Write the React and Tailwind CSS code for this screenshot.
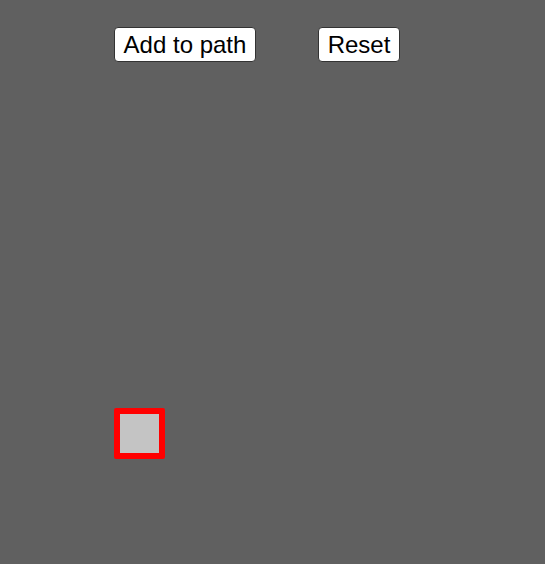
export default function App() {
  return (
    <div className="relative w-full h-[564px] bg-[#606060] overflow-hidden font-['Liberation_Sans',Arial,sans-serif]">
      <div className="flex pt-[27px] pl-[114px] gap-[62px]">
        <button className="w-[142px] h-[35px] bg-white border border-[#333] rounded-[4px] text-[24px] leading-none text-black flex items-center justify-center">
          Add to path
        </button>
        <button className="w-[82px] h-[35px] bg-white border border-[#333] rounded-[4px] text-[24px] leading-none text-black flex items-center justify-center">
          Reset
        </button>
      </div>
      <div className="absolute left-[114px] top-[408px] w-[51px] h-[51px] border-[6px] border-[#ff0000] rounded-[2px] bg-[#c4c4c4]" />
    </div>
  );
}
